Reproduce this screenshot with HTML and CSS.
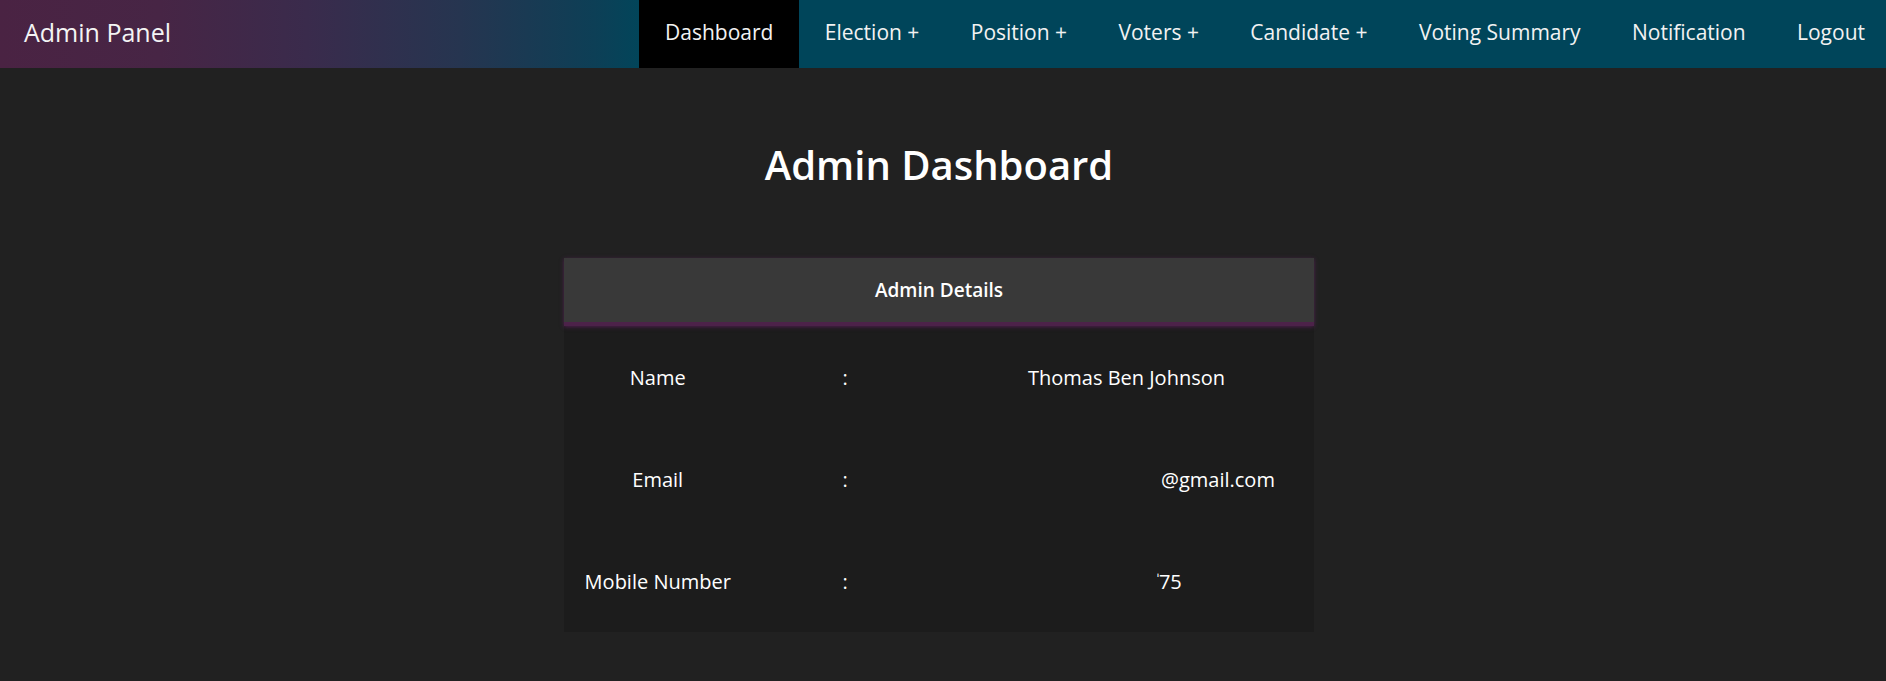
FILE: index.html
```html
<!DOCTYPE html>
<html lang="en">
<head>
<meta charset="utf-8">
<title>Admin Dashboard</title>
<link rel="stylesheet" href="styles.css">
</head>
<body>
<header class="topbar">
  <div class="brand">Admin Panel</div>
  <nav class="menu">
    <a class="menu-item active" href="#">Dashboard</a>
    <a class="menu-item" href="#">Election +</a>
    <a class="menu-item" href="#">Position +</a>
    <a class="menu-item" href="#">Voters +</a>
    <a class="menu-item" href="#">Candidate +</a>
    <a class="menu-item" href="#">Voting Summary</a>
    <a class="menu-item" href="#">Notification</a>
    <a class="menu-item" href="#">Logout</a>
  </nav>
</header>
<main class="content">
  <h1 class="page-title">Admin Dashboard</h1>
  <section class="card">
    <div class="card-head">Admin Details</div>
    <table class="details">
      <tr>
        <td class="label">Name</td>
        <td class="sep">:</td>
        <td class="value">Thomas Ben Johnson</td>
      </tr>
      <tr>
        <td class="label">Email</td>
        <td class="sep">:</td>
        <td class="value partial email">@gmail.com</td>
      </tr>
      <tr>
        <td class="label">Mobile Number</td>
        <td class="sep">:</td>
        <td class="value partial phone"><span class="tick">ˈ</span>75</td>
      </tr>
    </table>
  </section>
</main>
</body>
</html>
```

FILE: styles.css
```css
* { box-sizing: border-box; }

html, body {
  margin: 0;
  padding: 0;
}

body {
  background: #212121;
  color: #ffffff;
  font-family: "Open Sans", "Noto Sans", sans-serif;
  min-height: 681px;
}

.topbar {
  display: flex;
  height: 68px;
  align-items: stretch;
}

.brand {
  flex: 1;
  display: flex;
  align-items: center;
  padding: 0 0 4px 24px;
  font-size: 25px;
  color: #f4f4f4;
  background: linear-gradient(to right, #4a2343 0%, #472545 25%, #3a2b4c 48%, #263550 72%, #0d3f56 93%, #02455a 100%);
}

.menu {
  display: flex;
  background: #00455a;
}

.menu-item {
  display: flex;
  align-items: center;
  padding: 0 25.7px 4px;
  font-size: 21px;
  color: #f2f2f2;
  text-decoration: none;
}

.menu-item.active {
  background: #000000;
}

.menu-item:last-child {
  padding-right: 21px;
}

.content {
  display: flex;
  flex-direction: column;
  align-items: center;
  padding-right: 8px;
}

.page-title {
  margin: 70px 0 66px;
  font-size: 40px;
  font-weight: 600;
  line-height: 54px;
  color: #ffffff;
}

.card {
  width: 750px;
  background: #1c1c1c;
}

.card-head {
  height: 68px;
  display: flex;
  align-items: center;
  justify-content: center;
  background: #393939;
  font-size: 19px;
  font-weight: 600;
  border-bottom: 4px solid #4c2249;
  box-shadow: 0 1px 4px rgba(110, 30, 110, 0.6);
}

.details {
  width: 100%;
  border-collapse: collapse;
  table-layout: fixed;
  font-size: 20px;
}

.details td {
  height: 102px;
  padding: 0;
  text-align: center;
  vertical-align: middle;
}

.details .label { width: 25%; }
.details .sep { width: 25%; }
.details .value { width: 50%; }

.details .partial {
  text-align: left;
  padding-left: 222px;
}

.details .phone {
  padding-left: 218px;
}

.tick {
  font-size: 12px;
  vertical-align: 6px;
}
```
